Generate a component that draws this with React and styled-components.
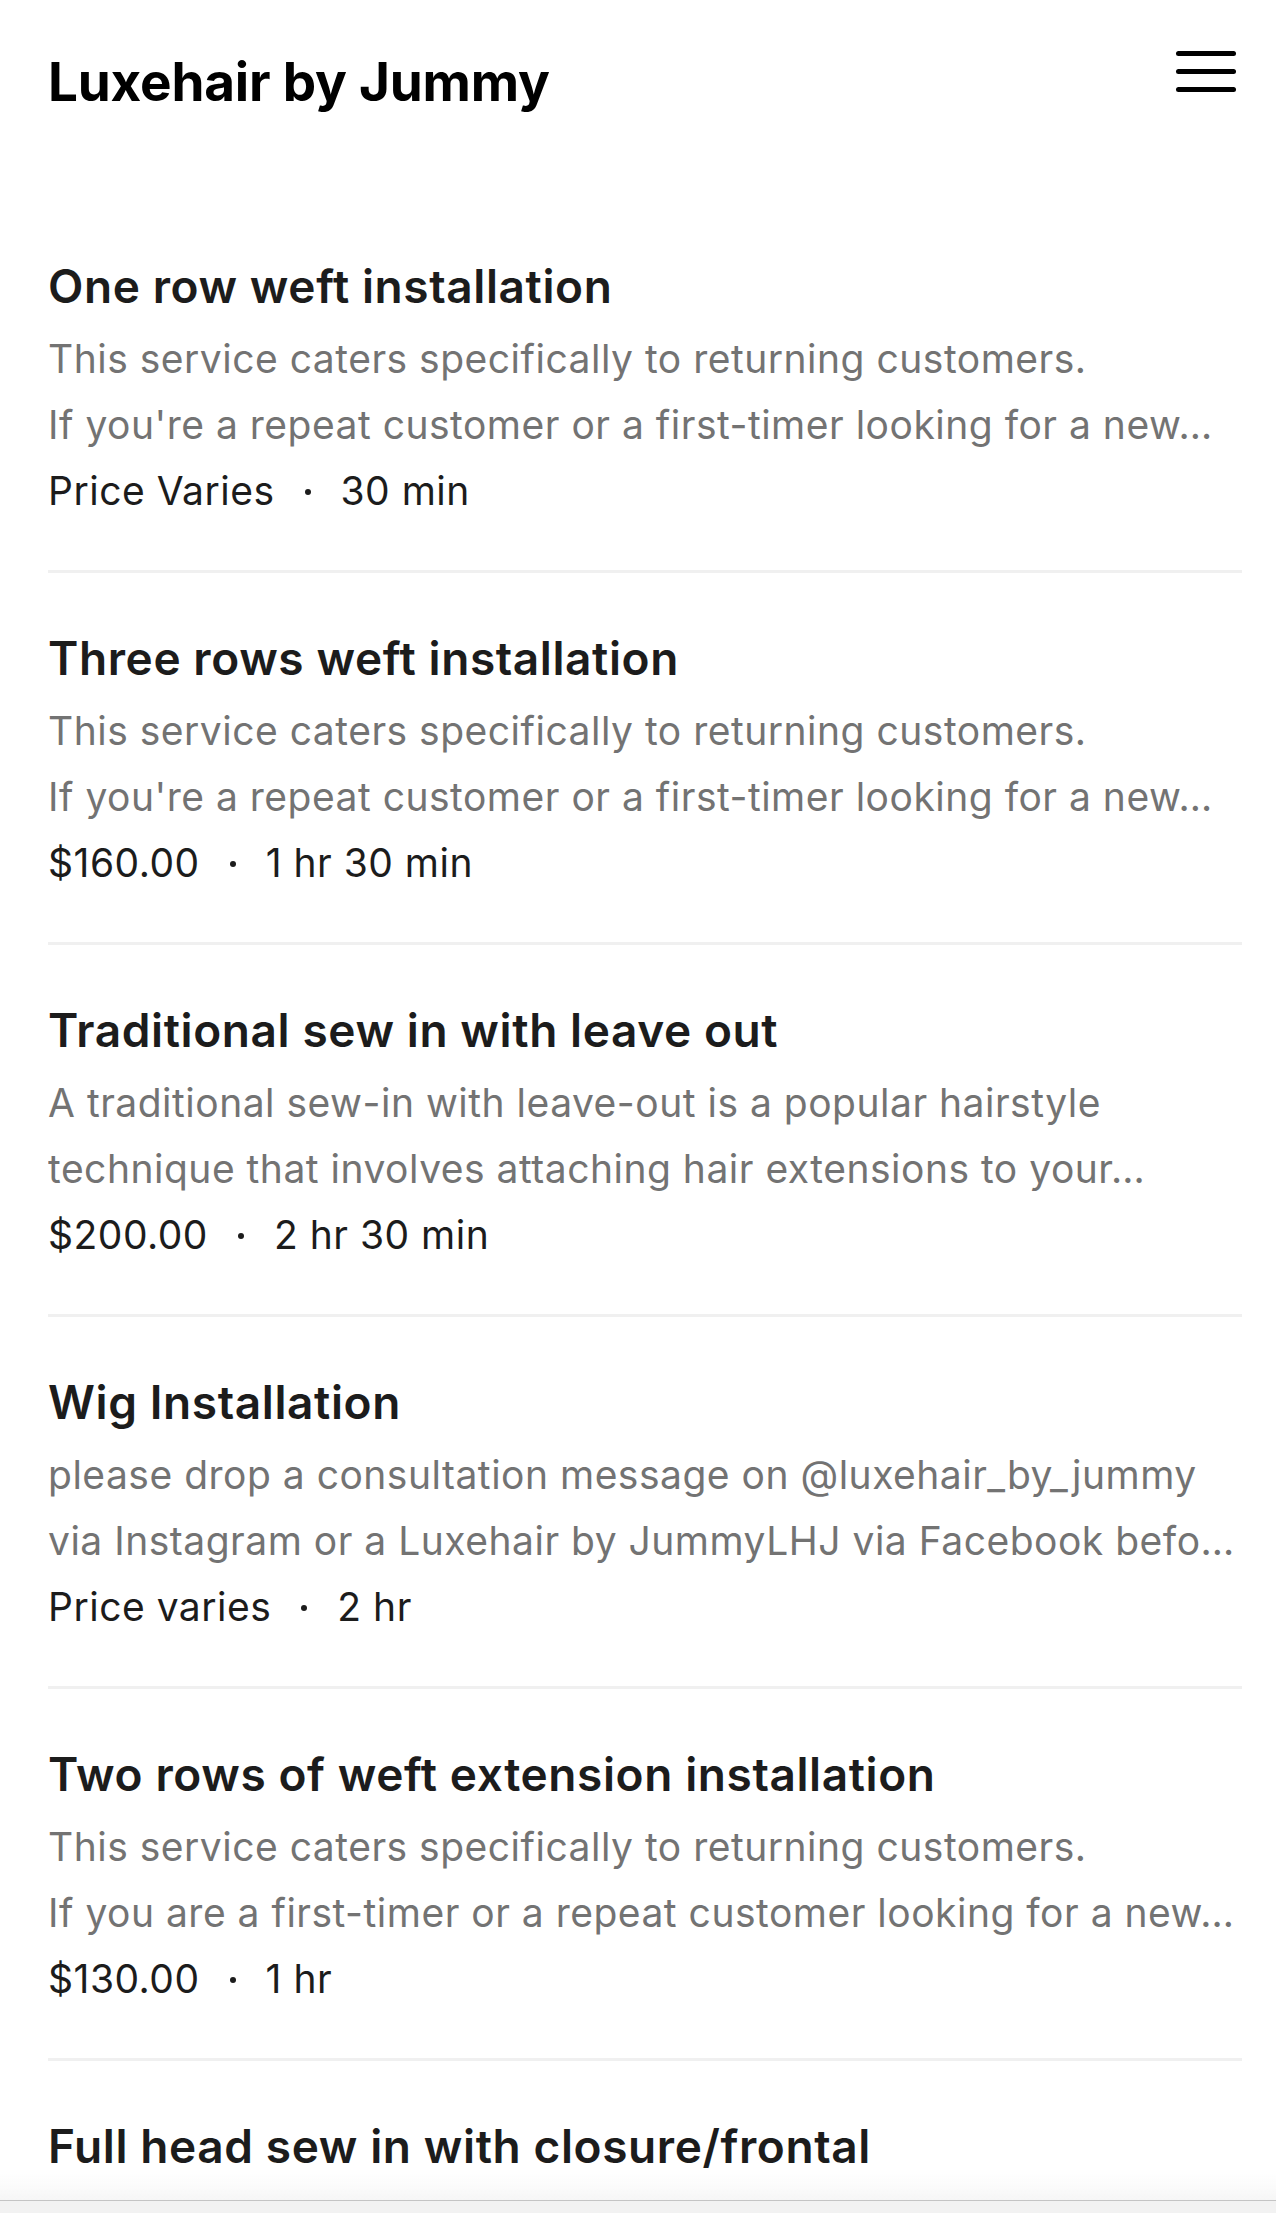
import React from 'react';
import styled, { createGlobalStyle } from 'styled-components';

const services = [
  {
    title: 'One row weft installation',
    lines: [
      'This service caters specifically to returning customers.',
      "If you're a repeat customer or a first-timer looking for a new…",
    ],
    price: 'Price Varies',
    duration: '30 min',
  },
  {
    title: 'Three rows weft installation',
    lines: [
      'This service caters specifically to returning customers.',
      "If you're a repeat customer or a first-timer looking for a new…",
    ],
    price: '$160.00',
    duration: '1 hr 30 min',
  },
  {
    title: 'Traditional sew in with leave out',
    lines: [
      'A traditional sew-in with leave-out is a popular hairstyle',
      'technique that involves attaching hair extensions to your…',
    ],
    price: '$200.00',
    duration: '2 hr 30 min',
  },
  {
    title: 'Wig Installation',
    lines: [
      'please drop a consultation message on @luxehair_by_jummy',
      'via Instagram or a Luxehair by JummyLHJ via Facebook befo…',
    ],
    price: 'Price varies',
    duration: '2 hr',
  },
  {
    title: 'Two rows of weft extension installation',
    lines: [
      'This service caters specifically to returning customers.',
      'If you are a first-timer or a repeat customer looking for a new…',
    ],
    price: '$130.00',
    duration: '1 hr',
  },
  {
    // below the fold: only the title is visible
    title: 'Full head sew in with closure/frontal',
    lines: [],
  },
];

const App = () => (
  <>
    <GlobalStyle />
    <Page>
      <Header>
        <Brand>Luxehair by Jummy</Brand>
        <MenuButton aria-label="Menu">
          <Bar />
          <Bar />
          <Bar />
        </MenuButton>
      </Header>

      <ServiceList>
        {services.map((s) => (
          <ServiceItem key={s.title}>
            <ServiceTitle>{s.title}</ServiceTitle>
            {s.lines.length > 0 && (
              <Description>
                {s.lines.map((line) => (
                  <DescLine key={line}>{line}</DescLine>
                ))}
              </Description>
            )}
            {s.price && (
              <Meta>
                <span>{s.price}</span>
                <Dot />
                <span>{s.duration}</span>
              </Meta>
            )}
          </ServiceItem>
        ))}
      </ServiceList>
    </Page>
    <BrowserBar />
  </>
);

const GlobalStyle = createGlobalStyle`
  html, body {
    margin: 0;
    padding: 0;
    background: #ffffff;
  }
  body {
    font-family: Inter, "Noto Sans", sans-serif;
    color: #1c1c1c;
    -webkit-font-smoothing: antialiased;
  }
`;

const Page = styled.div`
  padding: 50px 40px 0 48px;
  height: 2213px;
  overflow: hidden;
  box-sizing: border-box;
`;

const Header = styled.header`
  display: flex;
  justify-content: space-between;
  align-items: flex-start;
`;

const Brand = styled.h1`
  margin: 0;
  font-family: Inter, sans-serif;
  font-size: 53px;
  line-height: 64px;
  font-weight: 700;
  letter-spacing: -0.2px;
  color: #000;
`;

const MenuButton = styled.div`
  display: flex;
  flex-direction: column;
  gap: 13px;
  padding-top: 1px;
`;

const Bar = styled.span`
  display: block;
  width: 60px;
  height: 5px;
  border-radius: 3px;
  background: #000;
`;

const ServiceList = styled.ul`
  list-style: none;
  margin: 87px -6px 0 0;
  padding: 0;
`;

const ServiceItem = styled.li`
  padding: 57px 0 46px;
  border-bottom: 3px solid #f0f0f0;
`;

const ServiceTitle = styled.h2`
  margin: 0 0 12px;
  font-size: 46px;
  line-height: 56px;
  font-weight: 600;
  letter-spacing: 0.6px;
  color: #1c1c1c;
`;

const Description = styled.div`
  color: #737373;
`;

const DescLine = styled.p`
  margin: 0;
  font-size: 39px;
  line-height: 66px;
  letter-spacing: 0.5px;
  white-space: nowrap;
  overflow: hidden;
  text-overflow: ellipsis;
`;

const Meta = styled.div`
  display: flex;
  align-items: center;
  font-size: 39px;
  line-height: 66px;
  letter-spacing: 0.5px;
  color: #1c1c1c;
`;

const Dot = styled.span`
  width: 6px;
  height: 6px;
  border-radius: 50%;
  background: #1c1c1c;
  margin: 0 30px;
  position: relative;
  top: 1px;
`;

const BrowserBar = styled.div`
  position: fixed;
  left: 0;
  right: 0;
  bottom: 0;
  height: 12px;
  background: #f2f2f2;
  border-top: 1px solid #c4c4c4;

  &::before {
    content: '';
    position: absolute;
    left: 0;
    right: 0;
    bottom: 13px;
    height: 26px;
    background: linear-gradient(to bottom, rgba(246, 246, 246, 0), rgba(246, 246, 246, 1));
  }
`;

export default App;
